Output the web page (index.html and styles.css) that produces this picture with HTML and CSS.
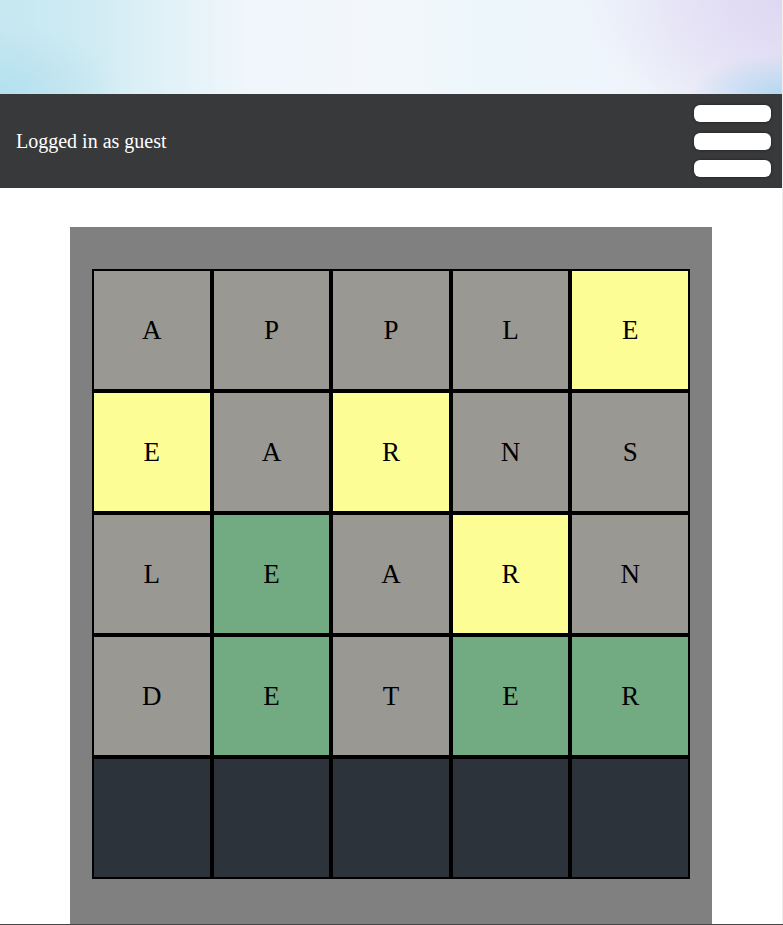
FILE: index.html
```html
<!DOCTYPE html>
<html lang="en">
<head>
<meta charset="utf-8">
<title>Word Game</title>
<link rel="stylesheet" href="styles.css">
</head>
<body>
<div class="page">
  <div class="banner"></div>
  <header class="topbar">
    <span class="user">Logged in as guest</span>
    <button class="menu" aria-label="Menu">
      <span class="bar"></span>
      <span class="bar"></span>
      <span class="bar"></span>
    </button>
  </header>
  <main class="content">
    <section class="board-panel">
      <div class="board">
        <div class="cell absent">A</div>
        <div class="cell absent">P</div>
        <div class="cell absent">P</div>
        <div class="cell absent">L</div>
        <div class="cell present">E</div>

        <div class="cell present">E</div>
        <div class="cell absent">A</div>
        <div class="cell present">R</div>
        <div class="cell absent">N</div>
        <div class="cell absent">S</div>

        <div class="cell absent">L</div>
        <div class="cell correct">E</div>
        <div class="cell absent">A</div>
        <div class="cell present">R</div>
        <div class="cell absent">N</div>

        <div class="cell absent">D</div>
        <div class="cell correct">E</div>
        <div class="cell absent">T</div>
        <div class="cell correct">E</div>
        <div class="cell correct">R</div>

        <div class="cell empty"></div>
        <div class="cell empty"></div>
        <div class="cell empty"></div>
        <div class="cell empty"></div>
        <div class="cell empty"></div>
      </div>
    </section>
  </main>
</div>
<div class="bottom-edge"></div>
</body>
</html>
```

FILE: styles.css
```css
html {
  background: #eeeeee;
  height: 100%;
  overflow: hidden;
}

body {
  margin: 0;
  width: 782px;
  height: 100%;
  background: #ffffff;
  font-family: "Liberation Serif", "Times New Roman", serif;
  overflow: hidden;
}

.page {
  display: flex;
  flex-direction: column;
}

.banner {
  height: 94px;
  background:
    radial-gradient(ellipse 90px 40px at 100% 100%, rgba(170, 215, 240, 0.85), rgba(170, 215, 240, 0) 100%),
    radial-gradient(ellipse 200px 120px at 100% 0%, rgba(222, 214, 242, 0.9), rgba(222, 214, 242, 0) 100%),
    radial-gradient(ellipse 120px 70px at 0% 100%, rgba(175, 222, 238, 0.8), rgba(175, 222, 238, 0) 100%),
    linear-gradient(90deg, #c6e8f1 0%, #d0ebf3 12%, #e2f2f8 22%, #f0f6fb 32%, #f3f7fc 50%, #edf7fb 62%, #eff4fb 80%, #e8e6f5 100%);
}

.topbar {
  height: 94px;
  background: #38393b;
  display: flex;
  align-items: center;
  justify-content: space-between;
  padding: 0 11px 0 16px;
}

.user {
  color: #ffffff;
  font-size: 20px;
}

.menu {
  display: flex;
  flex-direction: column;
  gap: 10.5px;
  padding: 0;
  margin: 0;
  border: 0;
  background: transparent;
}

.bar {
  display: block;
  width: 77px;
  height: 17px;
  border-radius: 6px;
  background: #ffffff;
  box-shadow: 0 0 3px rgba(0, 0, 0, 0.5);
}

.content {
  padding: 39px 70px 0;
}

.board-panel {
  background: #808080;
  padding: 42px 22px 60px;
}

.board {
  display: grid;
  grid-template-columns: repeat(5, 1fr);
  grid-auto-rows: 122px;
}

.cell {
  border: 2px solid #000000;
  display: flex;
  align-items: center;
  justify-content: center;
  font-size: 27px;
  color: #000000;
}

.absent { background: #9a9893; }
.present { background: #fdfd96; }
.correct { background: #72aa81; }
.empty { background: #2c333b; }

.bottom-edge {
  position: fixed;
  left: 0;
  right: 0;
  bottom: 0;
  height: 1px;
  background: #454545;
}
```
